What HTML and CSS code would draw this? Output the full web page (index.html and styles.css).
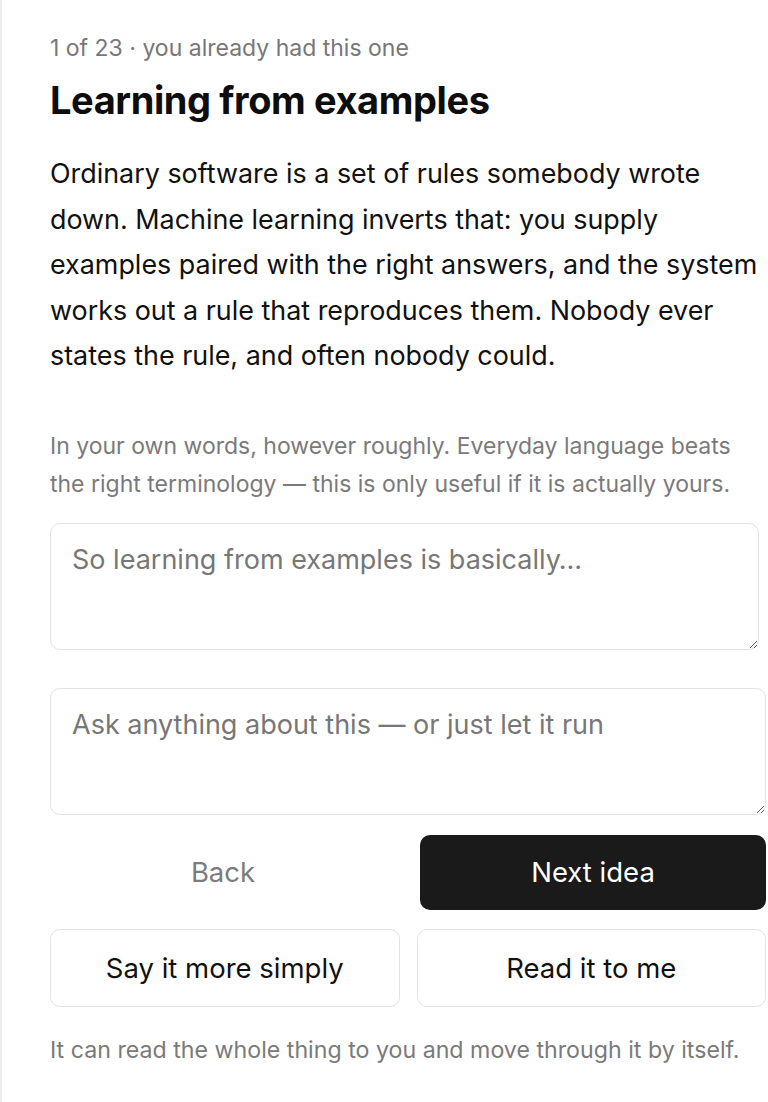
FILE: index.html
```html
<!DOCTYPE html>
<html lang="en">
<head>
<meta charset="utf-8">
<title>Learning from examples</title>
<link rel="stylesheet" href="styles.css">
</head>
<body>
<main class="page">
  <p class="meta">1 of 23 · you already had this one</p>
  <h1 class="title">Learning from examples</h1>
  <p class="body">Ordinary software is a set of rules somebody wrote down. Machine learning inverts that: you supply examples paired with the right answers, and the system works out a rule that reproduces them. Nobody ever states the rule, and often nobody could.</p>
  <p class="hint">In your own words, however roughly. Everyday language beats the right terminology — this is only useful if it is actually yours.</p>
  <textarea class="field field-own" placeholder="So learning from examples is basically…"></textarea>
  <textarea class="field field-ask" placeholder="Ask anything about this — or just let it run"></textarea>
  <div class="nav-row">
    <button class="btn btn-ghost">Back</button>
    <button class="btn btn-primary">Next idea</button>
  </div>
  <div class="tool-row">
    <button class="btn btn-outline">Say it more simply</button>
    <button class="btn btn-outline">Read it to me</button>
  </div>
  <p class="note">It can read the whole thing to you and move through it by itself.</p>
</main>
</body>
</html>
```
FILE: styles.css
```css
html, body {
  margin: 0;
  padding: 0;
  background: #ffffff;
}
body {
  font-family: Inter, "Noto Sans", "Liberation Sans", sans-serif;
  color: #111111;
}
.page {
  box-sizing: border-box;
  min-height: 1102px;
  border-left: 2px solid #ebebeb;
  padding: 32px 2px 0 48px;
  display: flex;
  flex-direction: column;
}
.meta {
  margin: 0;
  font-size: 23px;
  line-height: 32px;
  color: #777777;
}
.title {
  margin: 14px 0 0;
  font-size: 38px;
  line-height: 44px;
  font-weight: 700;
  letter-spacing: -0.4px;
  color: #0d0d0d;
}
.body {
  margin: 29px 0 0;
  font-size: 26.9px;
  line-height: 45.5px;
  color: #111111;
}
.hint {
  margin: 48px 0 0;
  font-size: 23px;
  line-height: 38px;
  color: #7a7a7a;
}
.field {
  box-sizing: border-box;
  display: block;
  height: 127px;
  margin: 0;
  padding: 18px 21px;
  border: 1.5px solid #e2e2e2;
  border-radius: 10px;
  font-family: inherit;
  font-size: 27px;
  line-height: 36px;
  color: #111111;
  background: #ffffff;
  outline: none;
}
.field::placeholder {
  color: #777777;
}
.field-own {
  width: 709px;
  margin-top: 20px;
}
.field-ask {
  width: 716px;
  margin-top: 38px;
}
.nav-row {
  display: grid;
  grid-template-columns: 1fr 1fr;
  gap: 24px;
  margin-top: 20px;
}
.tool-row {
  display: grid;
  grid-template-columns: 1fr 1fr;
  gap: 17px;
  margin-top: 19px;
}
.btn {
  box-sizing: border-box;
  font-family: inherit;
  font-size: 27.5px;
  border-radius: 10px;
  cursor: pointer;
  margin: 0;
  padding: 0;
}
.btn-ghost {
  height: 75px;
  border: none;
  background: transparent;
  color: #7c7c7c;
}
.btn-primary {
  height: 75px;
  border: none;
  background: #1a1a1a;
  color: #ffffff;
}
.btn-outline {
  height: 78px;
  border: 1.5px solid #e2e2e2;
  background: #ffffff;
  color: #111111;
}
.note {
  margin: 27px 0 0;
  font-size: 23.2px;
  line-height: 32px;
  color: #7a7a7a;
}
```
